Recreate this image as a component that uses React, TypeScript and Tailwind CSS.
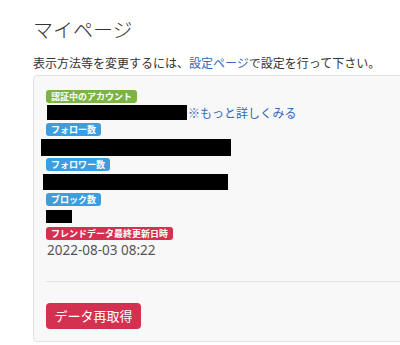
import React from 'react'

const jp = '[font-family:Meiryo,"Noto_Sans_CJK_JP","Noto_Sans",sans-serif]'

function Badge({ color, children }: { color: string; children: React.ReactNode }) {
  return (
    <div className="flex">
      <span
        className={`${color} rounded-[3px] px-[5px] h-[13px] leading-[13px] text-[9px] font-bold text-white whitespace-nowrap`}
      >
        {children}
      </span>
    </div>
  )
}

export default function App() {
  return (
    <div className={`w-[400px] h-[345px] overflow-hidden bg-white text-[#333] ${jp}`}>
      <div className="pl-[33px] pt-[16px]">
        <h1 className="text-[20px] leading-[28px] font-light text-[#333]">マイページ</h1>
        <p className="mt-[11px] text-[12px] leading-[16px] whitespace-nowrap">
          表示方法等を変更するには、<span className="text-[#3567b8]">設定ページ</span>で設定を行って下さい。
        </p>

        <div className="mt-[4px] w-[390px] h-[267px] rounded-[4px] border border-[#e3e3e3] bg-[#f8f8f8] pl-[12px] pt-[14px] flex flex-col">
          <Badge color="bg-[#7cb342]">認証中のアカウント</Badge>
          <div className="mt-[2px] flex items-center h-[15px]">
            <div className="ml-[1px] w-[140px] h-[15px] bg-black" />
            <span className="ml-[1px] text-[12px] leading-[15px] text-[#3567b8] whitespace-nowrap">※もっと詳しくみる</span>
          </div>

          <div className="mt-[3px]">
            <Badge color="bg-[#3c9de0]">フォロー数</Badge>
          </div>
          <div className="mt-[3px] ml-[-5px] w-[190px] h-[17px] bg-black" />

          <div className="mt-[2px]">
            <Badge color="bg-[#3c9de0]">フォロワー数</Badge>
          </div>
          <div className="mt-[3px] ml-[-3px] w-[185px] h-[16px] bg-black" />

          <div className="mt-[3px]">
            <Badge color="bg-[#3c9de0]">ブロック数</Badge>
          </div>
          <div className="mt-[4px] w-[26px] h-[13px] bg-black" />

          <div className="mt-[4px]">
            <Badge color="bg-[#d4304f]">フレンドデータ最終更新日時</Badge>
          </div>
          <div className="mt-[1px] ml-[1px] text-[13.5px] leading-[18px] text-[#555] [font-family:'Noto_Sans','Noto_Sans_CJK_JP',sans-serif]">
            2022-08-03 08:22
          </div>

          <div className="mt-[22px] border-t border-[#e3e3e3]" />

          <div className="mt-[21px] flex">
            <button className="w-[95px] h-[26px] rounded-[4px] bg-[#d4304f] text-white text-[13px] leading-[26px]">
              データ再取得
            </button>
          </div>
        </div>
      </div>
    </div>
  )
}
